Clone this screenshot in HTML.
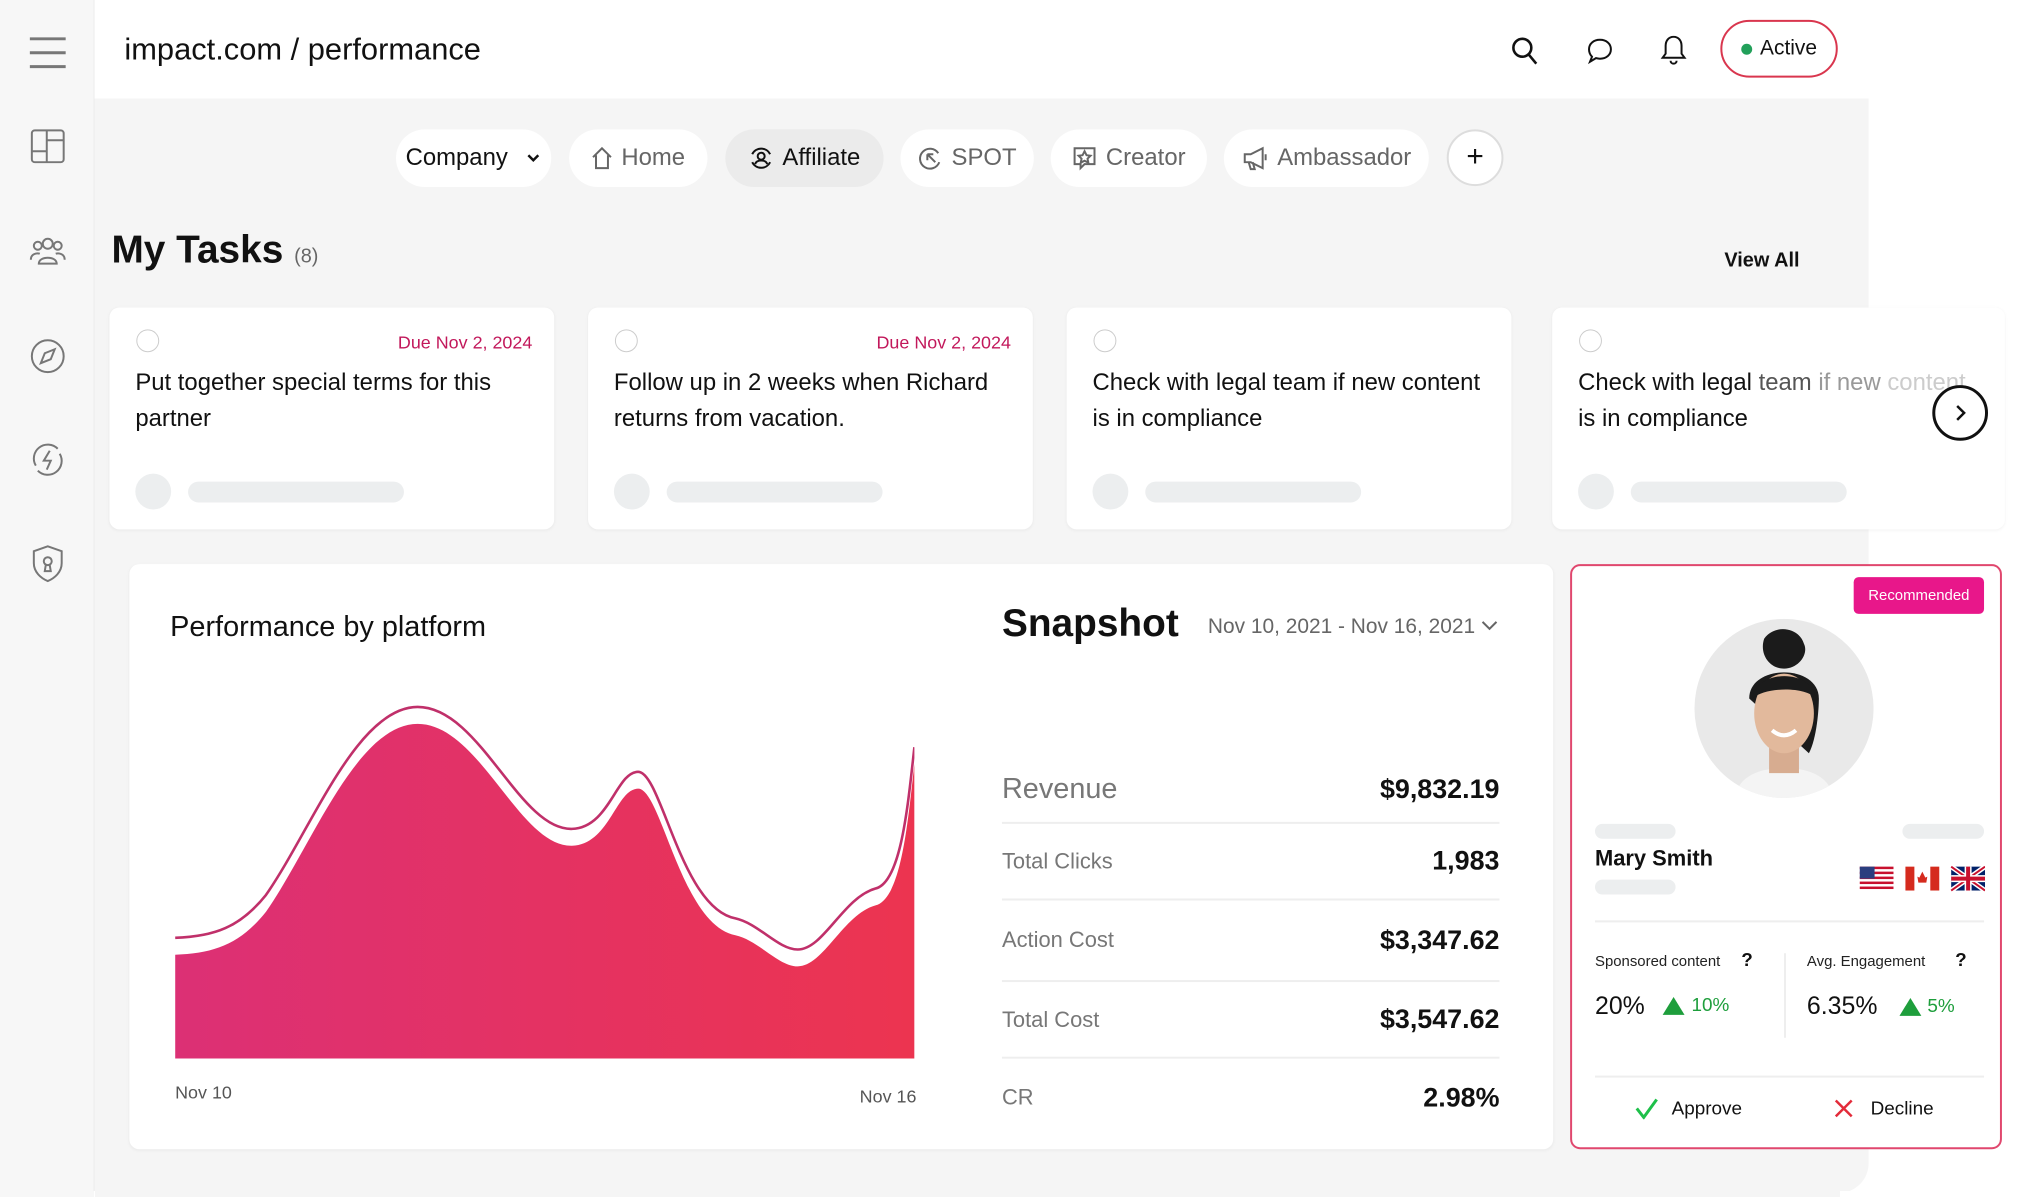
<!DOCTYPE html>
<html style="overflow:hidden;height:1197px"><head><meta charset="utf-8"><style>
*{margin:0;padding:0;box-sizing:border-box}
body{width:2034px;height:1197px;background:#fff;font-family:"Liberation Sans",sans-serif;color:#111;position:relative;overflow:hidden}
#w{position:absolute;left:0;top:0;width:2034px;height:1197px;transform:scale(0.995);transform-origin:0 0;overflow:hidden}
.a{position:absolute}
.side{left:0;top:0;width:95px;height:1204px;background:#f7f7f7;border-right:1px solid #ececec}
.main{left:95px;top:99px;width:1783px;height:1100px;background:#f5f5f5;border-radius:0 0 30px 0}
.ic{stroke:#777;fill:none;stroke-width:2}
.tab{top:130px;height:58px;border-radius:29px;background:#fff;font-size:24px;color:#666;display:flex;align-items:center;justify-content:center;gap:8px}
.card{background:#fff;border-radius:10px;top:309px;height:223px;box-shadow:0 1px 3px rgba(0,0,0,.05)}
.chk{left:27px;top:22px;width:23px;height:23px;border-radius:50%;border:1.5px solid #ccc}
.due{right:22px;top:25px;font-size:18px;color:#c2185b}
.tt{left:26px;top:58px;font-size:24px;line-height:36px;color:#111}
.sk1{left:26px;top:167px;width:36px;height:36px;border-radius:50%;background:#eceeef}
.sk2{left:79px;top:175px;width:217px;height:21px;border-radius:11px;background:#eceeef}
.row{left:1007px;width:500px;border-bottom:2px solid #eee;display:flex;justify-content:space-between;align-items:center}
.row span:first-child{font-size:22px;color:#777}
.row span:last-child{font-size:27px;font-weight:bold}
</style></head><body>
<div class="a" style="left:0;top:1180px;width:94px;height:17px;background:#f7f7f7"></div>
<div class="a" style="left:95px;top:1180px;width:1745px;height:17px;background:#f5f5f5"></div>
<div id="w">
<div class="a side"></div>
<div class="a main"></div>
<svg class="a" style="left:28px;top:36px" width="40" height="34"><g stroke="#777" stroke-width="3"><line x1="2" y1="3" x2="38" y2="3"/><line x1="2" y1="17" x2="38" y2="17"/><line x1="2" y1="31" x2="38" y2="31"/></g></svg>
<svg class="a ic" style="left:30px;top:129px" width="36" height="36"><rect x="2" y="2" width="32" height="32" rx="3"/><line x1="17" y1="2" x2="17" y2="34"/><line x1="2" y1="23" x2="17" y2="23"/><line x1="17" y1="12" x2="34" y2="12"/></svg>
<svg class="a ic" style="left:29px;top:236px" width="38" height="32"><circle cx="19" cy="9" r="5"/><circle cx="9" cy="11" r="4"/><circle cx="29" cy="11" r="4"/><path d="M10 29c0-8 18-8 18 0zM2 25c0-6 6-7 9-6M36 25c0-6-6-7-9-6"/></svg>
<svg class="a ic" style="left:30px;top:340px" width="36" height="36"><circle cx="18" cy="18" r="16"/><path d="M25 11l-4 10-10 4 4-10z"/></svg>
<svg class="a ic" style="left:30px;top:444px" width="36" height="36"><path d="M6 24a14 14 0 0 1 22-17M30 12a14 14 0 0 1-22 17"/><path d="M20 9l-6 10h7l-4 9"/></svg>
<svg class="a ic" style="left:31px;top:547px" width="34" height="40"><path d="M17 2l14 5v12c0 9-7 15-14 18C10 34 3 28 3 19V7z"/><circle cx="17" cy="17" r="4"/><path d="M15 21l-1 6h6l-1-6"/></svg>
<div class="a" style="left:125px;top:32px;font-size:31px;color:#111">impact.com / performance</div>
<svg class="a" style="left:1518px;top:36px" width="28" height="30" fill="none" stroke="#111" stroke-width="2.6"><circle cx="12" cy="12" r="9"/><line x1="18.5" y1="19" x2="26" y2="28"/></svg>
<svg class="a" style="left:1594px;top:37px" width="28" height="28" fill="none" stroke="#111" stroke-width="2"><path d="M14 3c6.5 0 11 4 11 9.5S20.5 22 14 22c-1.5 0-3-.3-4-.6L4 25l2-5c-2-2-3-4.5-3-7.5C3 7 7.5 3 14 3z"/></svg>
<svg class="a" style="left:1668px;top:34px" width="28" height="32" fill="none" stroke="#111" stroke-width="2"><path d="M14 3c-5 0-8 4-8 9v8l-3 4h22l-3-4v-8c0-5-3-9-8-9zM11 27a3 3 0 0 0 6 0"/></svg>
<div class="a" style="left:1729px;top:20px;width:118px;height:58px;border:2.5px solid #d9364e;border-radius:29px;display:flex;align-items:center;justify-content:center;font-size:21px;color:#111"><span style="width:11px;height:11px;border-radius:50%;background:#22a05a;margin-right:8px"></span>Active</div>
<div class="a tab" style="left:398px;width:156px;color:#111">Company <svg width="16" height="12" style="margin-left:10px"><path d="M3 3l5 5 5-5" stroke="#111" stroke-width="2.5" fill="none"/></svg></div>
<div class="a tab" style="left:572px;width:139px"><svg width="22" height="24" fill="none" stroke="#666" stroke-width="2"><path d="M2 11L11 2l9 9M5 9v13h12V9"/></svg>Home</div>
<div class="a tab" style="left:729px;width:159px;background:#ebebeb;color:#111"><svg width="26" height="26" fill="none" stroke="#111" stroke-width="2"><path d="M4 9a10 10 0 0 1 18 0M22 17a10 10 0 0 1-18 0"/><circle cx="13" cy="11" r="3.5"/><path d="M7 19c1-5 11-5 12 0"/></svg>Affiliate</div>
<div class="a tab" style="left:905px;width:134px"><svg width="26" height="26" fill="none" stroke="#666" stroke-width="2"><path d="M21 8A10 10 0 1 0 22 17"/><path d="M10 9l8 8M10 9v6M10 9h6"/></svg>SPOT</div>
<div class="a tab" style="left:1056px;width:157px"><svg width="26" height="26" fill="none" stroke="#666" stroke-width="2"><path d="M3 3h20v16H13l-4 4v-4H3z"/><path d="M13 6l2 4 4 .5-3 3 .8 4-3.8-2-3.8 2 .8-4-3-3 4-.5z"/></svg>Creator</div>
<div class="a tab" style="left:1230px;width:206px"><svg width="28" height="26" fill="none" stroke="#666" stroke-width="2"><path d="M3 9h6l12-6v20L9 17H3zM7 17l2 7h4l-2-7M24 9v6"/></svg>Ambassador</div>
<div class="a" style="left:1454px;top:130px;width:57px;height:57px;border-radius:50%;border:2px solid #ddd;background:#fff;font-size:30px;text-align:center;line-height:52px;color:#111">+</div>
<div class="a" style="left:112px;top:230px;font-size:39px;font-weight:bold">My Tasks <span style="font-size:20px;font-weight:normal;color:#666">(8)</span></div>
<div class="a" style="left:1733px;top:251px;font-size:20px;font-weight:bold">View All</div>
<div class="a card" style="left:110px;width:447px"><div class="a chk"></div><div class="a due">Due Nov 2, 2024</div><div class="a tt">Put together special terms for this<br>partner</div><div class="a sk1"></div><div class="a sk2"></div></div>
<div class="a card" style="left:591px;width:447px"><div class="a chk"></div><div class="a due">Due Nov 2, 2024</div><div class="a tt">Follow up in 2 weeks when Richard<br>returns from vacation.</div><div class="a sk1"></div><div class="a sk2"></div></div>
<div class="a card" style="left:1072px;width:447px"><div class="a chk"></div><div class="a tt">Check with legal team if new content<br>is in compliance</div><div class="a sk1"></div><div class="a sk2"></div></div>
<div class="a card" style="left:1560px;width:455px"><div class="a chk"></div><div class="a tt" style="white-space:nowrap;">Check with legal <span style="color:#555">team</span> <span style="color:#999">if new</span> <span style="color:#ccc">content</span><br>is in compliance</div><div class="a sk1"></div><div class="a sk2"></div>
<div class="a" style="left:382px;top:78px;width:56px;height:56px;border-radius:50%;border:3px solid #111;background:#fff;display:flex;align-items:center;justify-content:center"><svg width="14" height="20"><path d="M4 3l7 7-7 7" stroke="#111" stroke-width="2.5" fill="none"/></svg></div></div>
<div class="a" style="left:130px;top:567px;width:1431px;height:588px;background:#fff;border-radius:10px;box-shadow:0 1px 3px rgba(0,0,0,.05)"></div>
<div class="a" style="left:171px;top:614px;font-size:29px">Performance by platform</div>
<svg class="a" style="left:176px;top:704px" width="743" height="365" viewBox="135 540 570 280">
<defs><linearGradient id="g" x1="0" x2="1"><stop offset="0" stop-color="#dc3075"/><stop offset="1" stop-color="#ec3450"/></linearGradient></defs>
<path fill="url(#g)" d="M135,736 C165,735 185,728 205,703 C240,653 275,558 322,558 C370,558 400,653 441,652 C470,651 475,608 492,608 C510,608 525,713 567,721 C585,725 600,745 615,745 C635,745 650,705 675,698 C695,693 700,633 705,589 L705,816 L135,816 Z"/>
<path fill="none" stroke="#c0306a" stroke-width="2" d="M135,723 C165,722 185,715 205,690 C240,640 275,545 322,545 C370,545 400,640 441,639 C470,638 475,595 492,595 C510,595 525,700 567,708 C585,712 600,732 615,732 C635,732 650,692 675,685 C695,680 700,620 705,576"/>
</svg>
<div class="a" style="left:176px;top:1088px;font-size:18px;color:#555">Nov 10</div>
<div class="a" style="left:864px;top:1092px;font-size:18px;color:#555">Nov 16</div>
<div class="a" style="left:1007px;top:605px;font-size:39px;font-weight:bold">Snapshot</div>
<div class="a" style="left:1214px;top:618px;font-size:21px;color:#666">Nov 10, 2021 - Nov 16, 2021</div>
<svg class="a" style="left:1488px;top:622px" width="18" height="14"><path d="M2 3l7 7 7-7" stroke="#666" stroke-width="2" fill="none"/></svg>
<div class="a row" style="top:760px;height:68px"><span style="font-size:29px!important">Revenue</span><span>$9,832.19</span></div>
<div class="a row" style="top:828px;height:77px"><span>Total Clicks</span><span>1,983</span></div>
<div class="a row" style="top:905px;height:82px"><span>Action Cost</span><span>$3,347.62</span></div>
<div class="a row" style="top:987px;height:77px"><span>Total Cost</span><span>$3,547.62</span></div>
<div class="a row" style="top:1064px;height:78px;border:none"><span>CR</span><span>2.98%</span></div>
<div class="a" style="left:1578px;top:567px;width:434px;height:588px;background:#fff;border:2px solid #e0476e;border-radius:10px"></div>
<div class="a" style="left:1863px;top:580px;width:131px;height:37px;background:#e8178a;border-radius:5px;color:#fff;font-size:15px;text-align:center;line-height:37px">Recommended</div>
<svg class="a" style="left:1703px;top:622px" width="180" height="180"><defs><clipPath id="c"><circle cx="90" cy="90" r="90"/></clipPath></defs><g clip-path="url(#c)"><rect width="180" height="180" fill="#e9e9e9"/><path d="M40 180c5-25 30-30 50-30s45 5 50 30z" fill="#f4f4f4"/><rect x="75" y="120" width="30" height="35" fill="#d7ac90"/><path d="M55 80c0-35 70-35 70 0 0 10-2 40-10 55" fill="#1b1b1b"/><ellipse cx="90" cy="95" rx="30" ry="40" fill="#e2b99c"/><path d="M58 80c5-30 60-30 64 0c-10-12-50-12-64 0z" fill="#1b1b1b"/><path d="M70 20c10-15 35-12 40 5 5 10-5 25-20 25s-25-15-20-30z" fill="#1b1b1b"/><path d="M78 112q12 10 24 0" stroke="#fff" stroke-width="4" fill="none"/></g></svg>
<div class="a" style="left:1603px;top:828px;width:81px;height:15px;border-radius:8px;background:#eceeef"></div>
<div class="a" style="left:1912px;top:828px;width:82px;height:15px;border-radius:8px;background:#eceeef"></div>
<div class="a" style="left:1603px;top:850px;font-size:22px;font-weight:bold;color:#111">Mary Smith</div>
<div class="a" style="left:1603px;top:884px;width:81px;height:15px;border-radius:8px;background:#eceeef"></div>
<svg class="a" style="left:1869px;top:870px" width="126" height="26"><g><rect x="0" y="1" width="34" height="24" fill="#fff"/><g fill="#c8102e"><rect y="1" width="34" height="2.5"/><rect y="6" width="34" height="2.5"/><rect y="11" width="34" height="2.5"/><rect y="16" width="34" height="2.5"/><rect y="21" width="34" height="2.5"/></g><rect x="0" y="1" width="15" height="12" fill="#2b3e7f"/></g><g transform="translate(46,0)"><rect y="1" width="34" height="24" fill="#fff"/><rect y="1" width="9" height="24" fill="#d52b1e"/><rect x="25" y="1" width="9" height="24" fill="#d52b1e"/><path d="M17 6l3 6 2-1-1 6h-8l-1-6 2 1z" fill="#d52b1e"/></g><g transform="translate(92,0)"><rect y="1" width="34" height="24" fill="#012169"/><path d="M0 1l34 24M34 1L0 25" stroke="#fff" stroke-width="5"/><path d="M0 1l34 24M34 1L0 25" stroke="#c8102e" stroke-width="2"/><path d="M17 1v24M0 13h34" stroke="#fff" stroke-width="7"/><path d="M17 1v24M0 13h34" stroke="#c8102e" stroke-width="4"/></g></svg>
<div class="a" style="left:1603px;top:925px;width:391px;height:2px;background:#eee"></div>
<div class="a" style="left:1603px;top:958px;font-size:15px;color:#222">Sponsored content</div>
<div class="a" style="left:1750px;top:955px;font-size:19px;font-weight:bold">?</div>
<div class="a" style="left:1816px;top:958px;font-size:15px;color:#222">Avg. Engagement</div>
<div class="a" style="left:1965px;top:955px;font-size:19px;font-weight:bold">?</div>
<div class="a" style="left:1793px;top:958px;width:2px;height:85px;background:#eee"></div>
<div class="a" style="left:1603px;top:997px;font-size:25px">20%</div>
<svg class="a" style="left:1670px;top:1001px" width="24" height="20"><path d="M12 1L23 19H1z" fill="#1e9e3c"/></svg>
<div class="a" style="left:1700px;top:1000px;font-size:19px;color:#1e9e3c">10%</div>
<div class="a" style="left:1816px;top:997px;font-size:25px">6.35%</div>
<svg class="a" style="left:1908px;top:1002px" width="24" height="20"><path d="M12 1L23 19H1z" fill="#1e9e3c"/></svg>
<div class="a" style="left:1937px;top:1001px;font-size:19px;color:#1e9e3c">5%</div>
<div class="a" style="left:1603px;top:1081px;width:391px;height:2px;background:#eee"></div>
<svg class="a" style="left:1643px;top:1103px" width="24" height="22"><path d="M2 11l7 9L22 2" stroke="#1ec04a" stroke-width="3" fill="none"/></svg>
<div class="a" style="left:1680px;top:1104px;font-size:19px">Approve</div>
<svg class="a" style="left:1843px;top:1104px" width="20" height="20"><path d="M2 2l16 16M18 2L2 18" stroke="#e32b3a" stroke-width="2.5"/></svg>
<div class="a" style="left:1880px;top:1104px;font-size:19px">Decline</div>
</div></body></html>
